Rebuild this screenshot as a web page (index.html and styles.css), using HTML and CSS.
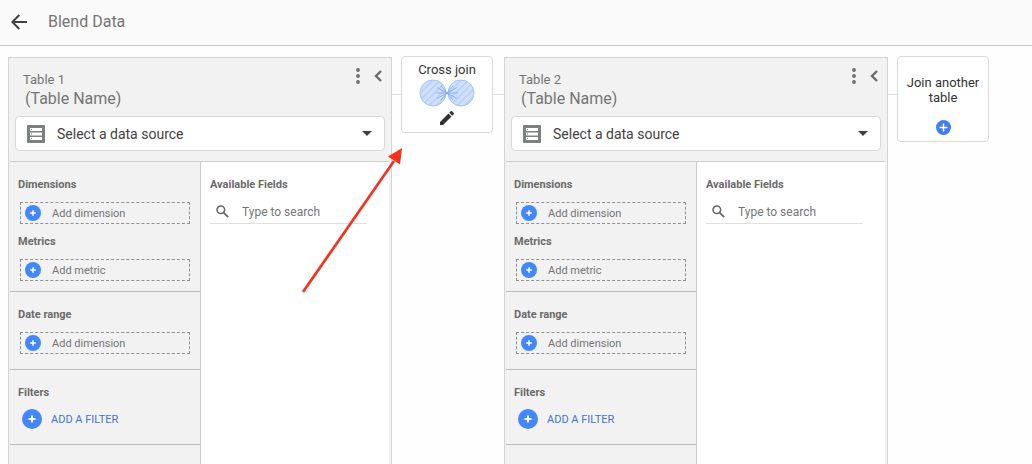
FILE: index.html
```html
<!DOCTYPE html>
<html lang="en">
<head>
<meta charset="utf-8">
<title>Blend Data</title>
<link rel="stylesheet" href="styles.css">
</head>
<body>
<svg class="sprite" aria-hidden="true">
  <defs>
    <symbol id="plus" viewBox="0 0 20 20"><circle cx="10" cy="10" r="10" fill="#4487fa"/><path d="M10 6.500v7M6.500 10h7" stroke="#fff" stroke-width="1.800"/></symbol>
    <symbol id="plus-wide" viewBox="0 0 20 20"><circle cx="10" cy="10" r="10" fill="#3f80ee"/><path d="M10 4.700v10.600M4.700 10h10.600" stroke="#fff" stroke-width="2"/></symbol>
    <symbol id="more" viewBox="0 0 6 16"><circle cx="3" cy="2" r="1.900"/><circle cx="3" cy="8" r="1.900"/><circle cx="3" cy="14" r="1.900"/></symbol>
    <symbol id="chevron" viewBox="0 0 8 12"><path d="M7 1L2 6l5 5" fill="none" stroke="#6b6b6b" stroke-width="2.400"/></symbol>
    <symbol id="source" viewBox="0 0 20 20"><rect x="1" y="1" width="18" height="18" rx="1" fill="#7b8081"/><path d="M4 4h12v3H4zM4 8.500h12v3H4zM4 13h12v3H4z" fill="#fff"/><path d="M5 5h1v1H5zM5 9.500h1v1H5zM5 14h1v1H5z" fill="#7b8081"/></symbol>
    <symbol id="caret" viewBox="0 0 10 5"><path d="M0 0h10L5 5z" fill="#424242"/></symbol>
    <symbol id="search" viewBox="0 0 13 13"><circle cx="4.800" cy="4.800" r="3.800" fill="none" stroke="#666" stroke-width="1.500"/><path d="M7.600 7.600l4.600 4.600" stroke="#666" stroke-width="1.800"/></symbol>
  </defs>
</svg>

<header class="topbar">
  <button class="icon-button" aria-label="Back">
    <svg width="16" height="16" viewBox="0 0 16 16"><path d="M16 8H1.500M8.300 1L1.400 8l6.900 7" fill="none" stroke="#424242" stroke-width="2"/></svg>
  </button>
  <h1 class="page-title">Blend Data</h1>
</header>

<main class="canvas">
  <section class="table-card">
    <div class="table-head">
      <div class="table-meta">
        <div class="names">
          <label class="table-label" for="name-1">Table 1</label>
          <input class="table-name" id="name-1" value="(Table Name)">
        </div>
        <div class="actions">
          <button class="icon-button" aria-label="More options"><svg class="more" width="6" height="16"><use href="#more"/></svg></button>
          <button class="icon-button" aria-label="Collapse"><svg width="8" height="12"><use href="#chevron"/></svg></button>
        </div>
      </div>
      <div class="source">
        <svg width="20" height="20"><use href="#source"/></svg>
        <select class="source-select" aria-label="Data source for table 1"><option>Select a data source</option></select>
        <svg width="10" height="5"><use href="#caret"/></svg>
      </div>
    </div>
    <div class="table-body">
      <div class="config">
        <section class="group">
          <h2 class="group-title">Dimensions</h2>
          <button class="drop"><svg width="16" height="16"><use href="#plus"/></svg>Add dimension</button>
          <h2 class="group-title">Metrics</h2>
          <button class="drop"><svg width="16" height="16"><use href="#plus"/></svg>Add metric</button>
        </section>
        <section class="group roomy">
          <h2 class="group-title">Date range</h2>
          <button class="drop"><svg width="16" height="16"><use href="#plus"/></svg>Add dimension</button>
        </section>
        <section class="group roomy">
          <h2 class="group-title">Filters</h2>
          <button class="add-filter"><svg width="20" height="20"><use href="#plus"/></svg>ADD A FILTER</button>
        </section>
      </div>
      <div class="fields">
        <h2 class="fields-title">Available Fields</h2>
        <label class="search"><svg width="13" height="13"><use href="#search"/></svg><input class="search-input" type="text" placeholder="Type to search" aria-label="Search fields of table 1"></label>
      </div>
    </div>
  </section>

  <div class="connector short"></div>
  <section class="join-card">
    <div class="join-label">Cross join</div>
    <svg class="join-figure" width="56" height="28" viewBox="0 0 56 28">
      <defs>
        <pattern id="hatch" width="5" height="5" patternUnits="userSpaceOnUse" patternTransform="rotate(45)"><path fill="#cfe1fc" d="M0 0h5v5H0z"/><path fill="#b5cff9" d="M0 0h1.500v5H0z"/></pattern>
      </defs>
      <circle cx="14" cy="14" r="13" fill="url(#hatch)" stroke="#a3c2f7"/>
      <circle cx="42" cy="14" r="13" fill="url(#hatch)" stroke="#a3c2f7"/>
      <path d="M17 14h22M18 8.500L28 14l-10 5.500M22 7l6 7-6 7M38 8.500L28 14l10 5.500M34 7l-6 7 6 7" fill="none" stroke="#7da8ee" stroke-width=".8"/>
    </svg>
    <button class="icon-button" aria-label="Edit join">
      <svg width="14" height="14" viewBox="0 0 14 14"><path d="M0 11L8.500 2.500l3 3L3 14H0zM9.300 1.700L10.700.3a1 1 0 0 1 1.400 0l1.600 1.600a1 1 0 0 1 0 1.400l-1.400 1.400z" fill="#333"/></svg>
    </button>
  </section>
  <div class="connector long"></div>

  <section class="table-card">
    <div class="table-head">
      <div class="table-meta">
        <div class="names">
          <label class="table-label" for="name-2">Table 2</label>
          <input class="table-name" id="name-2" value="(Table Name)">
        </div>
        <div class="actions">
          <button class="icon-button" aria-label="More options"><svg class="more" width="6" height="16"><use href="#more"/></svg></button>
          <button class="icon-button" aria-label="Collapse"><svg width="8" height="12"><use href="#chevron"/></svg></button>
        </div>
      </div>
      <div class="source">
        <svg width="20" height="20"><use href="#source"/></svg>
        <select class="source-select" aria-label="Data source for table 2"><option>Select a data source</option></select>
        <svg width="10" height="5"><use href="#caret"/></svg>
      </div>
    </div>
    <div class="table-body">
      <div class="config">
        <section class="group">
          <h2 class="group-title">Dimensions</h2>
          <button class="drop"><svg width="16" height="16"><use href="#plus"/></svg>Add dimension</button>
          <h2 class="group-title">Metrics</h2>
          <button class="drop"><svg width="16" height="16"><use href="#plus"/></svg>Add metric</button>
        </section>
        <section class="group roomy">
          <h2 class="group-title">Date range</h2>
          <button class="drop"><svg width="16" height="16"><use href="#plus"/></svg>Add dimension</button>
        </section>
        <section class="group roomy">
          <h2 class="group-title">Filters</h2>
          <button class="add-filter"><svg width="20" height="20"><use href="#plus"/></svg>ADD A FILTER</button>
        </section>
      </div>
      <div class="fields">
        <h2 class="fields-title">Available Fields</h2>
        <label class="search"><svg width="13" height="13"><use href="#search"/></svg><input class="search-input" type="text" placeholder="Type to search" aria-label="Search fields of table 2"></label>
      </div>
    </div>
  </section>

  <div class="connector short"></div>
  <button class="join-card join-add">
    Join another table
    <svg width="15" height="15"><use href="#plus-wide"/></svg>
  </button>

  <svg class="pointer" width="102" height="146" viewBox="0 0 102 146" aria-hidden="true">
    <path d="M1 144L92 13" stroke="#f5321f" stroke-width="2.700"/>
    <path d="M100 0L86 8.500l12 8z" fill="#f5321f"/>
  </svg>
</main>
</body>
</html>
```

FILE: styles.css
```css
* {
  box-sizing: border-box;
}

body {
  display: flex;
  flex-direction: column;
  height: 100vh;
  margin: 0;
  overflow: hidden;
  background: #fefefe;
  color: #757575;
  font-family: Roboto, "Liberation Sans", sans-serif;
}

h1,
h2 {
  margin: 0;
}

button,
input,
select {
  margin: 0;
  padding: 0;
  border: 0;
  background: none;
  color: inherit;
  font: inherit;
}

svg {
  display: block;
  flex: none;
}

.sprite {
  position: absolute;
  width: 0;
  height: 0;
}

.topbar {
  display: flex;
  flex: none;
  align-items: center;
  gap: 21px;
  height: 46px;
  padding: 0 11px 2px;
  border-bottom: 1px solid #c8c8c8;
  background: #fafafa;
}

.page-title {
  font-size: 16px;
  font-weight: 400;
  line-height: 20px;
}

.icon-button {
  display: flex;
}

.canvas {
  position: relative;
  display: flex;
  flex: 1;
  align-items: flex-start;
  min-height: 0;
  padding: 10px 43px 0 8px;
}

.table-card {
  display: flex;
  flex: 1;
  flex-direction: column;
  align-self: stretch;
  min-width: 0;
  margin-top: 1px;
  border: 1px solid #d4d4d4;
  border-width: 1px 1px 0;
  background: #f2f2f2;
}

.table-head {
  padding: 13px 6px 10px;
}

.table-meta {
  display: flex;
  justify-content: space-between;
  padding: 0 3px 7px 8px;
}

.names {
  display: flex;
  flex: 1;
  flex-direction: column;
  min-width: 0;
}

.table-label {
  font-size: 13px;
  line-height: 18px;
}

.table-name {
  height: 20px;
  margin-left: 2px;
  font-size: 16px;
  line-height: 20px;
}

.actions {
  display: flex;
  align-items: center;
  gap: 13px;
  height: 10px;
}

.more {
  fill: #6b6b6b;
}

.source {
  display: flex;
  align-items: center;
  height: 35px;
  padding: 0 12px 0 10px;
  border: 1px solid #d8d8d8;
  border-radius: 4px;
  background: #fff;
}

.source-select {
  flex: 1;
  min-width: 0;
  height: 33px;
  padding-left: 11px;
  appearance: none;
  color: #424242;
  font-size: 14px;
}

.table-body {
  display: flex;
  flex: 1;
  min-height: 0;
  margin: 0 2px 0 1px;
  border-top: 1px solid #ccc;
}

.config {
  flex: 0 0 191px;
  border-right: 1px solid #ccc;
}

.group {
  padding: 15px 10px 10px;
  border-bottom: 1px solid #bdbdbd;
}

.roomy {
  padding-bottom: 15px;
}

.group-title,
.fields-title {
  font-size: 11px;
  font-weight: 700;
  line-height: 16px;
  color: #6b6b6b;
}

.group-title {
  margin-left: -2px;
}

.drop {
  display: flex;
  align-items: center;
  gap: 11px;
  width: 100%;
  height: 22px;
  margin-top: 9px;
  padding: 0 4px;
  border: 1px dashed #909090;
  font-size: 11px;
}

.drop + .group-title {
  margin-top: 10px;
}

.add-filter {
  display: flex;
  align-items: center;
  gap: 9px;
  height: 20px;
  margin: 8px 0 0 2px;
  color: #4373d4;
  font-size: 11px;
}

.fields {
  flex: 1;
  min-width: 0;
  padding: 15px 22px 0 9px;
  background: #fff;
}

.search {
  display: flex;
  align-items: center;
  gap: 13px;
  height: 24px;
  margin-top: 7px;
  padding-left: 6px;
  border-bottom: 1px solid #e0e0e0;
}

.search-input {
  flex: 1;
  min-width: 0;
  font-size: 12px;
}

.search-input::placeholder {
  color: #757575;
  opacity: 1;
}

.connector {
  flex: none;
  height: 1px;
  margin-top: 38px;
  background: #e0e0e0;
}

.short {
  width: 9px;
}

.long {
  width: 11px;
}

.join-card {
  display: flex;
  flex: none;
  flex-direction: column;
  align-items: center;
  width: 92px;
  padding: 4px 0 7px;
  border: 1px solid #dadada;
  border-radius: 4px;
  background: #fff;
  color: #333;
  font-size: 13px;
  line-height: 18px;
}

.join-figure {
  margin-bottom: 4px;
}

.join-add {
  gap: 15px;
  padding: 18px 4px 6px;
  line-height: 15px;
}

.pointer {
  position: absolute;
  top: 102px;
  left: 302px;
}
```
